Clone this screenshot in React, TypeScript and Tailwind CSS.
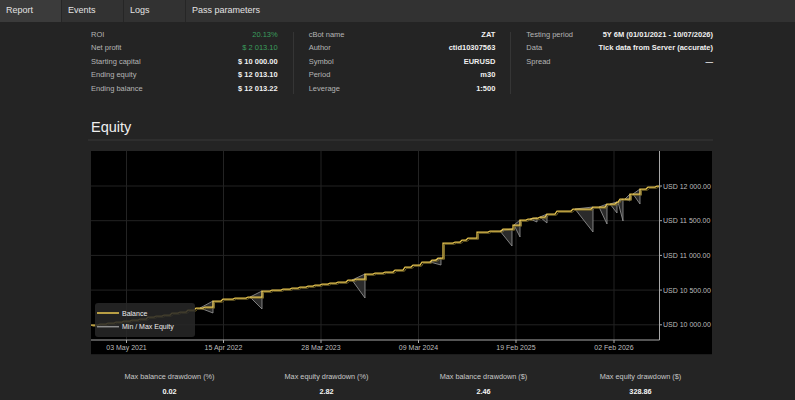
import React from "react";

// Backtest report — tab strip, summary table, equity chart, drawdown footer.

const tabs = ["Report", "Events", "Logs", "Pass parameters"];

type Row = { label: string; value: string; green?: boolean };

const columns: Row[][] = [
  [
    { label: "ROI", value: "20.13%", green: true },
    { label: "Net profit", value: "$ 2 013.10", green: true },
    { label: "Starting capital", value: "$ 10 000.00" },
    { label: "Ending equity", value: "$ 12 013.10" },
    { label: "Ending balance", value: "$ 12 013.22" },
  ],
  [
    { label: "cBot name", value: "ZAT" },
    { label: "Author", value: "ctid10307563" },
    { label: "Symbol", value: "EURUSD" },
    { label: "Period", value: "m30" },
    { label: "Leverage", value: "1:500" },
  ],
  [
    { label: "Testing period", value: "5Y 6M (01/01/2021 - 10/07/2026)" },
    { label: "Data", value: "Tick data from Server (accurate)" },
    { label: "Spread", value: "—" },
  ],
];

const drawdowns = [
  { label: "Max balance drawdown (%)", value: "0.02" },
  { label: "Max equity drawdown (%)", value: "2.82" },
  { label: "Max balance drawdown ($)", value: "2.46" },
  { label: "Max equity drawdown ($)", value: "328.86" },
];

// balance steps, page coordinates (x, y) — the svg viewBox matches the page
const balance: [number, number][] = [
  [91, 326], [100, 325], [108, 324], [116, 323], [124, 322], [132, 321], [140, 320],
  [148, 318], [156, 317], [164, 316], [172, 314], [180, 313], [188, 311], [196, 309],
  [205, 308], [213, 302], [223, 300], [235, 299], [248, 298], [262, 292], [272, 291],
  [283, 290], [292, 289], [300, 288], [308, 287], [315, 286], [322, 285], [330, 284],
  [338, 283], [348, 281], [356, 280], [365, 275], [375, 274], [385, 273], [395, 271],
  [405, 268], [413, 266], [422, 263], [432, 261], [438, 259], [443, 244], [455, 243],
  [462, 241], [468, 239], [477, 233], [490, 232], [503, 230], [513, 226], [520, 221],
  [528, 220], [533, 219], [540, 218], [547, 215], [557, 212], [573, 210], [593, 208],
  [607, 205], [617, 203], [620, 200], [630, 195], [640, 190], [648, 188], [657, 187],
];

// equity dips: start x, end x, lowest y
const dips: [number, number, number][] = [
  [200, 213, 314], [250, 262, 310], [352, 365, 299], [430, 441, 266],
  [500, 512, 247], [514, 520, 238], [530, 537, 223], [540, 547, 224],
  [575, 593, 233], [599, 607, 225], [610, 617, 214], [618, 623, 222],
  [625, 630, 202], [633, 640, 205],
];

function levelAt(x: number) {
  let y = balance[0][1];
  for (const [px, py] of balance) {
    if (px <= x) y = py;
  }
  return y;
}

// small moves drift diagonally, bigger closes jump straight up
function stairPath() {
  let d = `M${balance[0][0]} ${balance[0][1]}`;
  for (let i = 1; i < balance.length; i++) {
    const [x, y] = balance[i];
    const prevY = balance[i - 1][1];
    if (prevY - y >= 4) d += ` H${x} V${y}`;
    else d += ` H${x - 2} L${x} ${y}`;
  }
  return d + " H659";
}

const yTicks = [
  { y: 187, label: "USD 12 000.00" },
  { y: 221.7, label: "USD 11 500.00" },
  { y: 256.4, label: "USD 11 000.00" },
  { y: 291.1, label: "USD 10 500.00" },
  { y: 325.8, label: "USD 10 000.00" },
];

const xTicks = [
  { x: 126.5, label: "03 May 2021" },
  { x: 223.5, label: "15 Apr 2022" },
  { x: 321, label: "28 Mar 2023" },
  { x: 418.5, label: "09 Mar 2024" },
  { x: 516, label: "19 Feb 2025" },
  { x: 614, label: "02 Feb 2026" },
];

const svgFont = "'Liberation Sans', Arial, sans-serif";

function EquityChart() {
  const path = stairPath();
  return (
    <svg width={621} height={203} viewBox="91 152 621 203" className="block">
      <rect x={91} y={152} width={621} height={203} fill="#000" />

      {/* grid */}
      {xTicks.map((t) => (
        <line key={t.label} x1={t.x} x2={t.x} y1={152} y2={341} stroke="#232323" strokeWidth={1} />
      ))}
      {yTicks.map((t) => (
        <line key={t.label} x1={91} x2={659} y1={t.y} y2={t.y} stroke="#232323" strokeWidth={1} />
      ))}

      {/* equity dips */}
      {dips.map(([x0, x1, low]) => (
        <polygon
          key={x0}
          points={`${x0},${levelAt(x0)} ${x1},${low} ${x1},${levelAt(x1)}`}
          fill="#2b2b2b"
          stroke="#9a9a9a"
          strokeWidth={0.8}
          strokeLinejoin="round"
        />
      ))}

      {/* max equity shadow + balance */}
      <path d={path} fill="none" stroke="#7a6a2a" strokeWidth={1} transform="translate(1.5 1.2)" />
      <path d={path} fill="none" stroke="#ebc850" strokeWidth={1.25} />

      {/* axes */}
      <line x1={659.5} x2={659.5} y1={152} y2={341} stroke="#a8a8a8" strokeWidth={1} />
      <line x1={91} x2={659.5} y1={341} y2={341} stroke="#a8a8a8" strokeWidth={1} />
      {yTicks.map((t) => (
        <g key={t.label}>
          <line x1={659.5} x2={662} y1={t.y} y2={t.y} stroke="#a8a8a8" strokeWidth={1} />
          <text x={663} y={t.y + 2.5} fontSize={7} fill="#bdbdbd" fontFamily={svgFont}>
            {t.label}
          </text>
        </g>
      ))}
      {xTicks.map((t) => (
        <g key={t.label}>
          <line x1={t.x} x2={t.x} y1={341} y2={344} stroke="#a8a8a8" strokeWidth={1} />
          <text x={t.x} y={350.5} fontSize={7} fill="#bdbdbd" textAnchor="middle" fontFamily={svgFont}>
            {t.label}
          </text>
        </g>
      ))}

      {/* legend */}
      <rect x={95} y={304} width={100} height={34} rx={3} fill="rgba(40,40,40,0.85)" />
      <line x1={97} x2={119} y1={314} y2={314} stroke="#ebc850" strokeWidth={1.5} />
      <line x1={97} x2={119} y1={327.7} y2={327.7} stroke="#8c8c8c" strokeWidth={1.5} />
      <text x={122} y={316.5} fontSize={7} fill="#ececec" fontFamily={svgFont}>
        Balance
      </text>
      <text x={122} y={330.2} fontSize={7} fill="#ececec" fontFamily={svgFont}>
        Min / Max Equity
      </text>
    </svg>
  );
}

export default function App() {
  return (
    <div className="h-[400px] w-[795px] overflow-hidden bg-[#242424] font-['Liberation_Sans',Arial,sans-serif]">
      {/* ── Tabs ─────────────────────────────────────────── */}
      <div className="flex h-[22px] bg-[#323232]">
        {tabs.map((t, i) => (
          <div
            key={t}
            className={
              i === 0
                ? "flex w-[62px] items-center border-r border-[#262626] bg-[#3b3b3b] pl-[6px] text-[9px] text-[#e2e2e2]"
                : i === tabs.length - 1
                  ? "flex items-center pl-[6px] text-[9px] text-[#e2e2e2]"
                  : "flex w-[62px] items-center border-r border-[#262626] pl-[6px] text-[9px] text-[#e2e2e2]"
            }
          >
            {t}
          </div>
        ))}
      </div>

      <div className="ml-[91px] w-[622px]">
        {/* ── Summary ─────────────────────────────────────── */}
        <div className="flex pt-[5.5px]">
          {columns.map((col, ci) => (
            <React.Fragment key={ci}>
              {ci > 0 && <div className="mx-[15px] mt-[4px] mb-[1px] w-px bg-[#353535]" />}
              <div className="flex w-[187px] flex-col">
                {col.map((r) => (
                  <div key={r.label} className="flex h-[13.6px] items-center justify-between text-[7.5px]">
                    <span className="text-[#b4b4b4]">{r.label}</span>
                    <span className={r.green ? "text-[#3a9d5d]" : "font-bold text-[#f0f0f0]"}>{r.value}</span>
                  </div>
                ))}
              </div>
            </React.Fragment>
          ))}
        </div>

        {/* ── Equity ──────────────────────────────────────── */}
        <h2 className="mt-[23px] h-[18px] text-[14.5px] leading-[18px] text-[#efefef]">Equity</h2>
        <div className="-ml-[3px] mt-[3px] h-[2px] w-[625px] bg-[#2e2e2e]" />
        <div className="mt-[10px] w-[621px] border-b border-[#1c1c1c]">
          <EquityChart />
        </div>

        {/* ── Drawdowns ───────────────────────────────────── */}
        <div className="mt-[14px] grid w-[628px] grid-cols-4">
          {drawdowns.map((d) => (
            <div key={d.label} className="flex flex-col items-center">
              <span className="h-[15px] text-[7.3px] leading-[15px] text-[#c8c8c8]">{d.label}</span>
              <span className="h-[15px] text-[7.3px] font-bold leading-[15px] text-[#f4f4f4]">{d.value}</span>
            </div>
          ))}
        </div>
      </div>
    </div>
  );
}
